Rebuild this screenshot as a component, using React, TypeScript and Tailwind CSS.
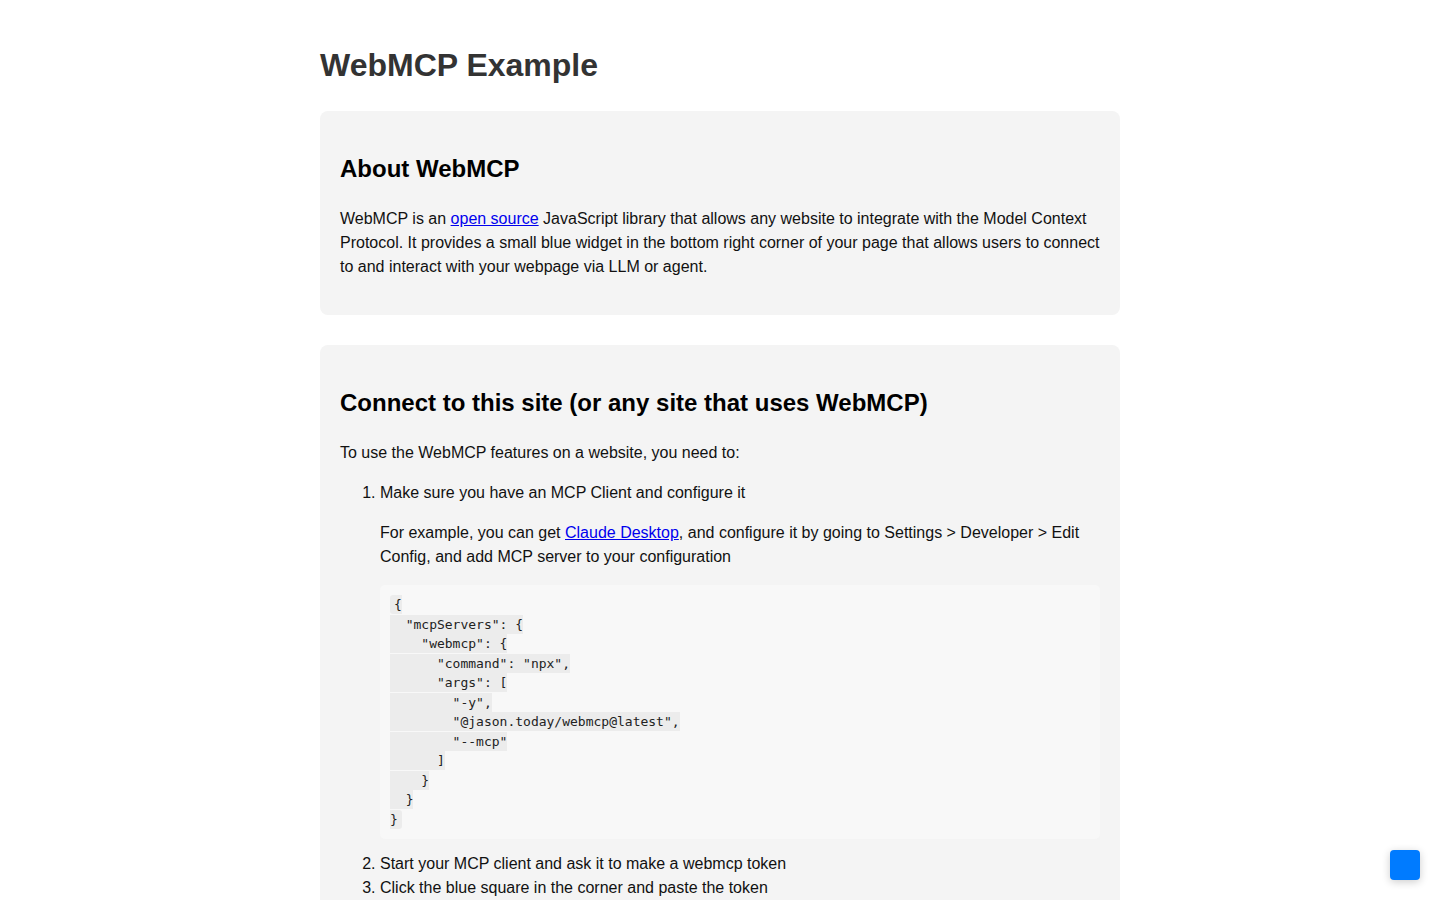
import React from 'react';

const config = `{
  "mcpServers": {
    "webmcp": {
      "command": "npx",
      "args": [
        "-y",
        "@jason.today/webmcp@latest",
        "--mcp"
      ]
    }
  }
}`;

function Card({ children }: { children: React.ReactNode }) {
  return <section className="mb-[30px] rounded-lg bg-[#f4f4f4] px-5 py-5">{children}</section>;
}

export default function App() {
  return (
    <div className="min-h-screen bg-white p-5 font-['Liberation_Sans',Arial,sans-serif] text-base leading-6 text-[#111]">
      <div className="mx-auto max-w-[800px]">
        <h1 className="mt-[21px] mb-[22px] text-[32px] leading-[48px] font-bold text-[#333]">
          WebMCP Example
        </h1>

        {/* About */}
        <Card>
          <h2 className="mt-5 mb-5 text-2xl leading-9 font-bold text-black">About WebMCP</h2>
          <p className="mb-4">
            WebMCP is an{' '}
            <a href="#" className="text-[#0000ee] underline">
              open source
            </a>{' '}
            JavaScript library that allows any website to integrate with the Model Context Protocol. It
            provides a small blue widget in the bottom right corner of your page that allows users to
            connect to and interact with your webpage via LLM or agent.
          </p>
        </Card>

        {/* Connect */}
        <Card>
          <h2 className="mt-5 mb-5 text-2xl leading-9 font-bold text-black">
            Connect to this site (or any site that uses WebMCP)
          </h2>
          <p className="mb-4">To use the WebMCP features on a website, you need to:</p>
          <ol className="mb-4 list-decimal pl-10">
            <li>
              Make sure you have an MCP Client and configure it
              <p className="my-4">
                For example, you can get{' '}
                <a href="#" className="text-[#0000ee] underline">
                  Claude Desktop
                </a>
                , and configure it by going to Settings &gt; Developer &gt; Edit Config, and add MCP server
                to your configuration
              </p>
              <pre className="mb-[13px] rounded-[5px] bg-[#f8f8f8] p-[10px] font-['DejaVu_Sans_Mono',monospace] text-[13px] leading-[19.5px] whitespace-pre text-[#222]">
                <code className="rounded-[3px] bg-[#ececec] px-[4px] py-[2px] font-['DejaVu_Sans_Mono',monospace] text-[13px] leading-[19.5px]">
                  {config}
                </code>
              </pre>
            </li>
            <li>Start your MCP client and ask it to make a webmcp token</li>
            <li>Click the blue square in the corner and paste the token</li>
            <li>Ask your client to interact with the page</li>
          </ol>
        </Card>
      </div>

      {/* Widget */}
      <button
        aria-label="WebMCP"
        className="fixed right-5 bottom-5 h-[30px] w-[30px] rounded-[4px] bg-[#007bff] shadow-[0_2px_8px_rgba(0,0,0,0.2)]"
      />
    </div>
  );
}
